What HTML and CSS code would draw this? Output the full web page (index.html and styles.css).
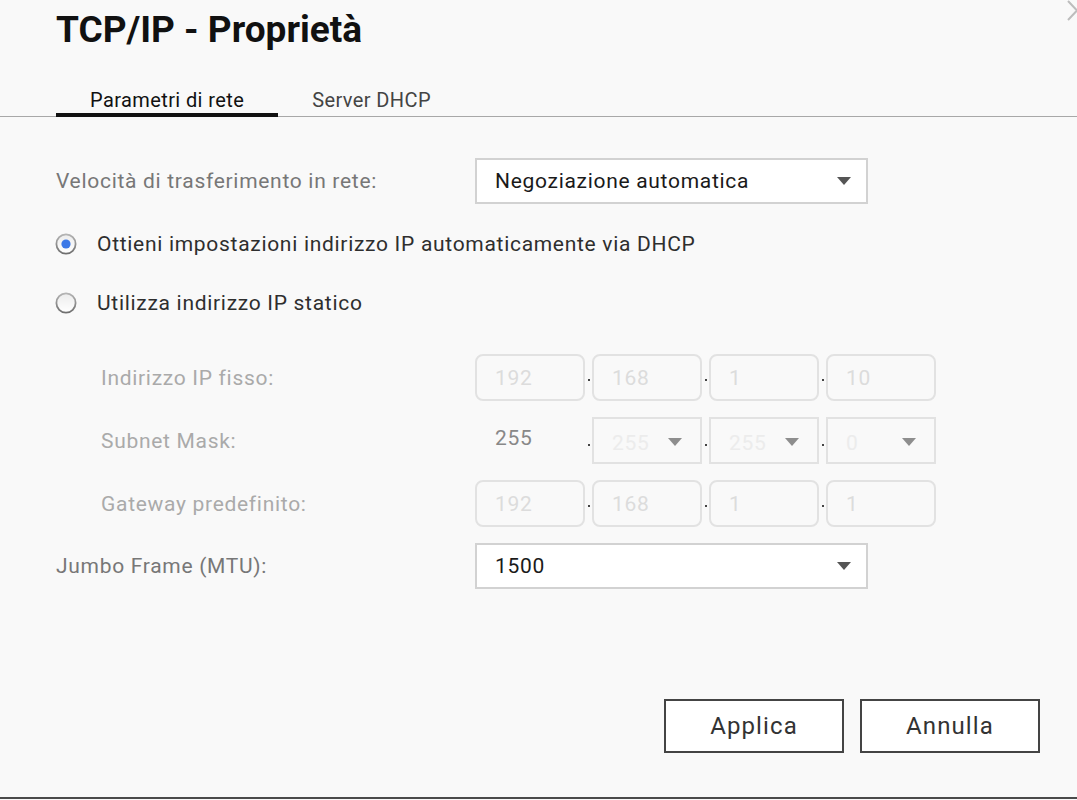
FILE: index.html
```html
<!DOCTYPE html>
<html lang="it">
<head>
  <meta charset="UTF-8">
  <meta name="viewport" content="width=device-width, initial-scale=1.0">
  <title>TCP/IP - Proprietà</title>
  <link rel="stylesheet" href="styles.css">
</head>
<body>
  <div class="dialog">
    <svg class="close" width="12" height="22" viewBox="0 0 12 22">
      <polyline points="1,1 10,10.5 1,20" fill="none" stroke="#bdbdbd" stroke-width="2"/>
    </svg>

    <h1>TCP/IP - Proprietà</h1>

    <div class="tabs">
      <div class="tab active">Parametri di rete</div>
      <div class="tab">Server DHCP</div>
    </div>

    <div class="form">
      <div class="row row-speed">
        <div class="label">Velocità di trasferimento in rete:</div>
        <div class="select">
          <span>Negoziazione automatica</span>
          <span class="arrow"></span>
        </div>
      </div>

      <div class="radio-row first">
        <svg class="radio" width="22" height="22" viewBox="0 0 22 22">
          <defs>
            <linearGradient id="ring" x1="0" y1="0" x2="0" y2="1">
              <stop offset="0" stop-color="#b4b4b4"/>
              <stop offset="1" stop-color="#6f6f6f"/>
            </linearGradient>
            <linearGradient id="face" x1="0" y1="0" x2="0" y2="1">
              <stop offset="0" stop-color="#ececec"/>
              <stop offset="1" stop-color="#ffffff"/>
            </linearGradient>
          </defs>
          <circle cx="11" cy="11" r="9.6" fill="url(#face)" stroke="url(#ring)" stroke-width="1.8"/>
          <circle cx="11" cy="11" r="4.6" fill="#3b78e7"/>
        </svg>
        <span>Ottieni impostazioni indirizzo IP automaticamente via DHCP</span>
      </div>

      <div class="radio-row">
        <svg class="radio" width="22" height="22" viewBox="0 0 22 22">
          <circle cx="11" cy="11" r="9.6" fill="url(#face)" stroke="url(#ring)" stroke-width="1.8"/>
        </svg>
        <span>Utilizza indirizzo IP statico</span>
      </div>

      <div class="static">
        <div class="row ip-row">
          <div class="label sub">Indirizzo IP fisso:</div>
          <div class="octets">
            <div class="octet">192</div><span class="sep"></span>
            <div class="octet">168</div><span class="sep"></span>
            <div class="octet">1</div><span class="sep"></span>
            <div class="octet">10</div>
          </div>
        </div>

        <div class="row ip-row">
          <div class="label sub">Subnet Mask:</div>
          <div class="octets">
            <div class="octet plain">255</div><span class="sep low"></span>
            <div class="octet pick">255<span class="arrow light"></span></div><span class="sep low"></span>
            <div class="octet pick">255<span class="arrow light"></span></div><span class="sep low"></span>
            <div class="octet pick">0<span class="arrow light"></span></div>
          </div>
        </div>

        <div class="row ip-row">
          <div class="label sub">Gateway predefinito:</div>
          <div class="octets">
            <div class="octet">192</div><span class="sep"></span>
            <div class="octet">168</div><span class="sep"></span>
            <div class="octet">1</div><span class="sep"></span>
            <div class="octet">1</div>
          </div>
        </div>
      </div>

      <div class="row row-jumbo">
        <div class="label">Jumbo Frame (MTU):</div>
        <div class="select">
          <span>1500</span>
          <span class="arrow"></span>
        </div>
      </div>
    </div>

    <div class="actions">
      <button class="btn">Applica</button>
      <button class="btn">Annulla</button>
    </div>
  </div>
</body>
</html>
```

FILE: styles.css
```css
html, body {
  margin: 0;
  padding: 0;
}
body {
  font-family: Roboto, "Noto Sans", Arial, sans-serif;
  background-color: #f9f9f9;
  color: #222;
  width: 1077px;
  height: 800px;
  overflow: hidden;
}
.dialog {
  position: relative;
  height: 799px;
  box-sizing: border-box;
  border-bottom: 2px solid #4a4a4a;
  display: flex;
  flex-direction: column;
}
.close {
  position: absolute;
  top: 0;
  right: -2px;
}
h1 {
  margin: 0;
  padding: 8px 0 0 56px;
  font-size: 37px;
  line-height: 44px;
  font-weight: 700;
  color: #111;
}

/* tabs */
.tabs {
  display: flex;
  padding: 36px 0 0 56px;
  border-bottom: 1px solid #a8a8a8;
}
.tab {
  padding: 0 34px 1px;
  font-size: 20px;
  line-height: 24px;
  letter-spacing: 0.4px;
  color: #444;
  border-bottom: 4px solid transparent;
  margin-bottom: -1px;
}
.tab.active {
  color: #111;
  border-bottom-color: #111;
}

/* form */
.form {
  padding-left: 56px;
  letter-spacing: 0.7px;
}
.row {
  display: flex;
  align-items: center;
}
.label {
  width: 419px;
  font-size: 21px;
  color: #777;
}
.label.sub {
  box-sizing: border-box;
  padding-left: 45px;
  color: #aaa;
}
.row-speed {
  margin-top: 41px;
}
.select {
  width: 393px;
  height: 46px;
  box-sizing: border-box;
  border: 2px solid #d2d2d2;
  background-color: #fff;
  display: flex;
  align-items: center;
  justify-content: space-between;
  padding: 0 15px 0 18px;
  font-size: 21px;
  color: #1a1a1a;
}
.arrow {
  width: 0;
  height: 0;
  border-left: 7.5px solid transparent;
  border-right: 7.5px solid transparent;
  border-top: 8px solid #555;
}
.arrow.light {
  border-top-color: #8e8e8e;
}

.radio-row {
  display: flex;
  align-items: center;
  height: 40px;
  margin-top: 19px;
  font-size: 21px;
  color: #2e2e2e;
}
.radio-row.first {
  margin-top: 20px;
}
.radio {
  margin-left: -1px;
  margin-right: 20px;
}

.static {
  margin-top: 31px;
  display: flex;
  flex-direction: column;
  gap: 16px;
}
.ip-row {
  height: 47px;
}
.octets {
  display: flex;
  align-items: stretch;
  height: 47px;
}
.octet {
  width: 110px;
  box-sizing: border-box;
  border: 2px solid #e2e2e2;
  border-radius: 8px;
  display: flex;
  align-items: center;
  padding-left: 18px;
  font-size: 21px;
  color: #dcdcdc;
}
.octet.plain {
  border-color: transparent;
  color: #888;
  padding-bottom: 6px;
}
.octet.pick {
  border-radius: 0;
  justify-content: space-between;
  padding-right: 18px;
  color: #ececec;
  padding-top: 4px;
}
.octet.pick .arrow {
  margin-top: -2px;
}
.sep {
  width: 7px;
  display: flex;
  align-items: center;
  justify-content: center;
}
.sep::before {
  content: "";
  width: 2px;
  height: 2px;
  margin-top: 4px;
  background-color: #444;
}
.sep.low::before {
  margin-top: 8px;
}

.row-jumbo {
  margin-top: 16px;
}

/* buttons */
.actions {
  display: flex;
  justify-content: flex-end;
  gap: 16px;
  padding-right: 37px;
  margin-top: 110px;
}
.btn {
  width: 180px;
  height: 54px;
  border: 2px solid #444;
  background-color: #fff;
  font-family: Roboto, "Noto Sans", Arial, sans-serif;
  font-size: 24px;
  letter-spacing: 1.1px;
  color: #333;
  cursor: pointer;
}
```
